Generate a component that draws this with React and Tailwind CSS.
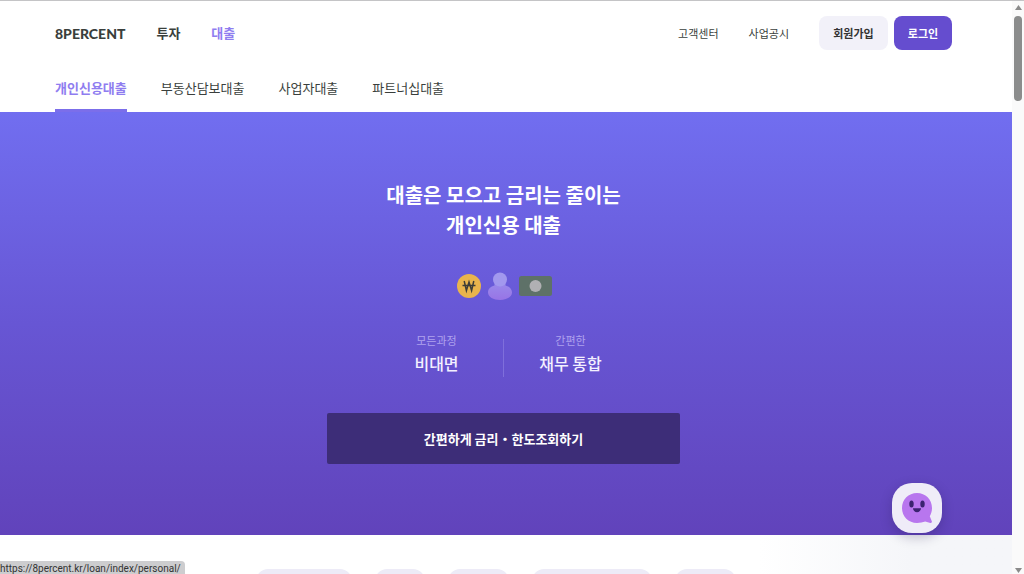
import clsx from 'clsx';

const mainNav = [
  { label: '투자', href: '#invest' },
  { label: '대출', href: '#loan', active: true },
];

const loanTabs = [
  { label: '개인신용대출', href: '#personal', active: true },
  { label: '부동산담보대출', href: '#estate' },
  { label: '사업자대출', href: '#business' },
  { label: '파트너십대출', href: '#partner' },
];

function Header() {
  return (
    <header className="border-t border-[#c4c4c6] bg-white pl-[55px] pr-[60px] text-[#3a3f3c]">
      <div className="flex items-center justify-between pt-[15px]">
        <nav className="flex items-center gap-[31px] text-[13px] font-bold">
          <a href="#home" className="font-[Lato] text-[14px] font-black">8PERCENT</a>
          {mainNav.map((item) => (
            <a key={item.label} href={item.href} className={clsx(item.active && 'text-[#8f7df0]')}>
              {item.label}
            </a>
          ))}
        </nav>

        <div className="flex items-center text-[11px]">
          <a href="#help" className="mr-[30px]">고객센터</a>
          <a href="#notice" className="mr-[30px]">사업공시</a>
          <button type="button" className="mr-1.5 h-[34px] w-[69px] rounded-lg bg-[#f2f1f9] font-bold text-[#333]">
            회원가입
          </button>
          <button type="button" className="h-[34px] w-[58px] rounded-lg bg-[#654dcf] font-bold text-white">
            로그인
          </button>
        </div>
      </div>

      {/* Loan type tabs */}
      <nav className="mt-[28px] flex gap-[34px] text-[13px] leading-5">
        {loanTabs.map((tab) => (
          <a
            key={tab.label}
            href={tab.href}
            className={clsx(
              'border-b-3 pb-[11px]',
              tab.active ? 'border-[#7b6eea] font-bold text-[#8f7df0]' : 'border-transparent'
            )}
          >
            {tab.label}
          </a>
        ))}
      </nav>
    </header>
  );
}

function HeroIcons() {
  return (
    <div className="mt-8 flex h-7 items-center justify-center gap-[7px] pl-0.5">
      <svg width="24" height="24" viewBox="0 0 24 24" aria-hidden="true">
        <circle cx="12" cy="12" r="12" fill="#e9b44c" />
        <path d="M7.200 7l2.200 9.500L12 8l2.600 8.500L16.800 7M5.500 11.500h13" fill="none" stroke="#3d3d38" strokeWidth="1.500" />
      </svg>
      <svg width="24" height="28" viewBox="0 0 24 28" aria-hidden="true">
        <defs>
          <linearGradient id="person" x1="0" y1="0" x2="0" y2="1">
            <stop offset="0" stopColor="#9a8dec" />
            <stop offset="1" stopColor="#9874e6" />
          </linearGradient>
        </defs>
        <path d="M6.500 9h11v4.500c4 1 6.500 3.500 6.500 7 0 4.500-5.500 7.500-12 7.500S0 25 0 20.500c0-3.500 2.500-6 6.500-7z" fill="url(#person)" />
        <circle cx="12" cy="7.500" r="7" fill="#a298ee" />
      </svg>
      <svg width="33" height="21" viewBox="0 0 33 21" aria-hidden="true">
        <rect width="33" height="20" rx="2.500" fill="#5e7168" />
        <circle cx="16.500" cy="10" r="6" fill="#b0b0b3" />
      </svg>
    </div>
  );
}

function Stat({ label, value }) {
  return (
    <div className="w-[133px] text-center">
      <dt className="text-[11px] leading-[18px] text-[#afa2ee]">{label}</dt>
      <dd className="text-[16px] font-medium leading-7 text-[#f3f0ff]">{value}</dd>
    </div>
  );
}

function Hero() {
  return (
    <section className="bg-linear-to-b from-[#716ef0] via-[#6756d4] to-[#6143bb] pb-[71px] pl-[55px] pr-[60px] pt-[68px]">
      <h1 className="text-center text-[20px] font-bold leading-[30px] text-white">
        대출은 모으고 금리는 줄이는
        <br />
        개인신용 대출
      </h1>
      <HeroIcons />
      <dl className="mt-[31px] flex items-end justify-center">
        <Stat label="모든과정" value="비대면" />
        <div className="h-[38px] w-px bg-[#7f6fdb]" />
        <Stat label="간편한" value="채무 통합" />
      </dl>
      <button
        type="button"
        className="mx-auto mt-9 block h-[51px] w-full max-w-[353px] rounded-xs bg-[#3d2d78] text-[13px] font-bold text-white"
      >
        간편하게 금리・한도조회하기
      </button>
    </section>
  );
}

// Tops of the shortcut pills under the hero
function Shortcuts() {
  return (
    <section className="flex flex-1 justify-center gap-[23px] bg-linear-to-r from-white from-75% to-[#f5f6f9] to-90% pr-5 pt-[34px]">
      <div className="h-10 w-24 rounded-xl bg-[#edebf7]" />
      <div className="h-10 w-[50px] rounded-xl bg-[#edebf7]" />
      <div className="h-10 w-[61px] rounded-xl bg-[#edebf7]" />
      <div className="h-10 w-[120px] rounded-xl bg-[#edebf7]" />
      <div className="h-10 w-[61px] rounded-xl bg-[#edebf7]" />
    </section>
  );
}

function ChatButton() {
  return (
    <button
      type="button"
      aria-label="채팅 상담"
      className="absolute bottom-[41px] right-[82px] flex size-[50px] items-center justify-center rounded-[20px] bg-[#efecf8] shadow-[0_4px_12px_rgba(30,20,70,0.25)]"
    >
      <svg width="32" height="32" viewBox="0 0 32 32" aria-hidden="true">
        <path
          d="M16 1c8.500 0 15 6.500 15 15 0 3.500-1 6-2.200 8.200l2 5c.4 1.200-.3 1.900-1.400 1.700l-5.200-1.300C21.800 30.500 19 31 16 31 7.500 31 1 24.500 1 16S7.500 1 16 1z"
          fill="#b876ee"
        />
        <ellipse cx="10.500" cy="12" rx="2.200" ry="3.500" fill="#3b2370" />
        <ellipse cx="21.500" cy="12" rx="2.200" ry="3.500" fill="#3b2370" />
        <path d="M12 16.200h8c0 2.300-1.800 4-4 4s-4-1.700-4-4z" fill="#3b2370" />
      </svg>
    </button>
  );
}

function Scrollbar() {
  return (
    <div className="flex w-3 shrink-0 flex-col items-center justify-between border-t border-[#c4c4c6] bg-[#fafafa] pb-px pt-1">
      <div className="flex flex-col items-center gap-1.5">
        <svg width="7" height="5" viewBox="0 0 7 5" aria-hidden="true">
          <path d="M3.500 0L7 5H0z" fill="#8a8a8a" />
        </svg>
        <div className="h-[85px] w-2 rounded-full bg-[#8b8c8c]" />
      </div>
      <svg width="7" height="5" viewBox="0 0 7 5" aria-hidden="true">
        <path d="M0 0h7L3.500 5z" fill="#8a8a8a" />
      </svg>
    </div>
  );
}

export default function App() {
  return (
    <div className="relative flex h-screen overflow-hidden bg-white font-['Noto_Sans_CJK_KR',sans-serif]">
      <main className="flex min-w-0 flex-1 flex-col">
        <Header />
        <Hero />
        <Shortcuts />
      </main>
      <Scrollbar />
      <ChatButton />

      {/* Link preview in the corner */}
      <div className="absolute bottom-0 left-0 h-[13px] whitespace-nowrap rounded-tr bg-[#cdcdcf] pr-1 font-[Roboto,sans-serif] text-[10px] leading-4 text-[#333]">
        https://8percent.kr/loan/index/personal/
      </div>
    </div>
  );
}
